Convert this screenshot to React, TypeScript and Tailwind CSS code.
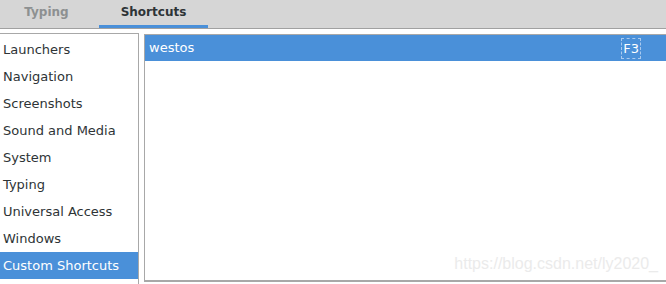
const categories = [
  'Launchers',
  'Navigation',
  'Screenshots',
  'Sound and Media',
  'System',
  'Typing',
  'Universal Access',
  'Windows',
  'Custom Shortcuts',
]

export default function App() {
  return (
    <div className="w-[666px] h-[284px] overflow-hidden bg-white text-[13px] text-[#2e3436] font-['DejaVu_Sans',sans-serif]">
      <header className="h-[29px] bg-[#d6d6d6] border-b border-[#a1a1a1] flex text-[12px]">
        <div className="w-[99px] flex items-center justify-center font-bold text-[#8d9091] pb-[4px] pr-[6px]">
          Typing
        </div>
        <div className="w-[109px] flex items-center justify-center font-bold text-[#2e3436] border-b-[3px] border-[#4a90d9] pb-[1px]">
          Shortcuts
        </div>
      </header>

      <div className="flex pt-[4px]">
        <ul className="w-[139px] h-[251px] border-t border-r border-[#a8a8a8] pt-[2px]">
          {categories.map((c) => (
            <li
              key={c}
              className={
                'h-[27px] flex items-center pl-[3px] ' +
                (c === 'Custom Shortcuts' ? 'bg-[#4a90d9] text-white' : '')
              }
            >
              {c}
            </li>
          ))}
        </ul>

        <div className="ml-[5px] mt-[1px] flex-1 h-[248px] border-t border-l border-b-2 border-[#a8a8a8] relative">
          <div className="h-[26px] bg-[#4a90d9] text-white flex items-center pl-[4px] pr-[25px]">
            <span className="flex-1">westos</span>
            <span className="border border-dashed border-[#a9c9ee] px-[1px] leading-[19px]">F3</span>
          </div>
          <div className="absolute right-[8px] bottom-[4px] text-[16px] text-[#ebebeb] font-['Liberation_Sans',sans-serif]">
            https://blog.csdn.net/ly2020_
          </div>
        </div>
      </div>
    </div>
  )
}
